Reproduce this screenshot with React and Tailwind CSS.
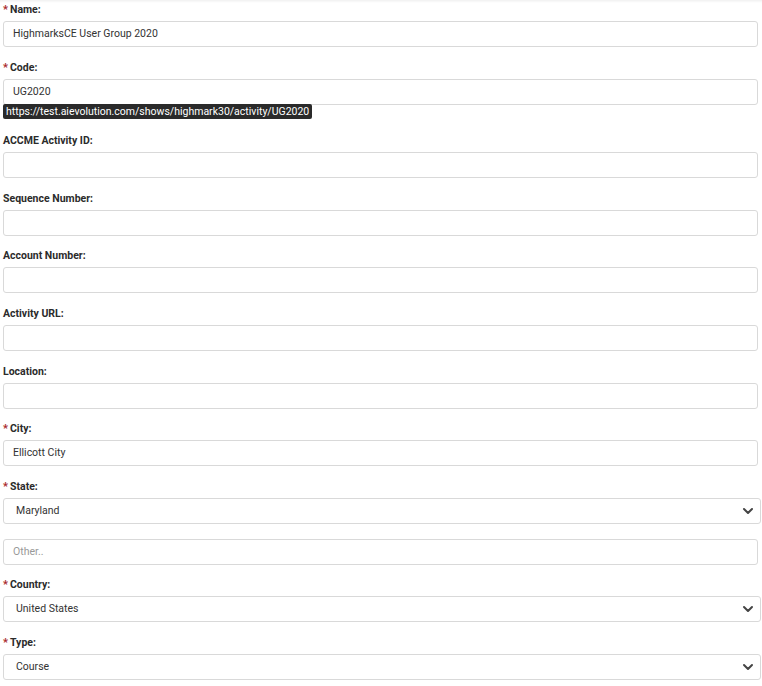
const font = { fontFamily: "Roboto, 'Liberation Sans', sans-serif" };

function Label({ text, required }) {
  return (
    <div className="h-[14px] mb-[4px] flex items-center text-[10.5px] font-bold text-[#2b2b2b] leading-[14px]">
      {required && <span className="text-[#a8252b] mr-[2px] text-[11px]">*</span>}
      {text}
    </div>
  );
}

function TextInput({ value, placeholder }) {
  return (
    <div className="h-[26px] w-[755px] border border-[#d9d9d9] rounded-[3px] bg-white flex items-center pl-[9px] text-[10.5px] text-[#333]">
      {value ? value : <span className="text-[#999]">{placeholder}</span>}
    </div>
  );
}

function Select({ value }) {
  return (
    <div className="h-[26px] w-[758px] border border-[#d9d9d9] rounded-[3px] bg-white flex items-center justify-between pl-[12px] pr-[6px] text-[10.5px] text-[#333]">
      <span>{value}</span>
      <svg width="12" height="12" viewBox="0 0 12 12" className="text-[#444]">
        <path d="M2 4 L6 8 L10 4" fill="none" stroke="currentColor" strokeWidth="2" strokeLinecap="round" strokeLinejoin="round" />
      </svg>
    </div>
  );
}

function Field({ label, required, children }) {
  return (
    <div className="mb-[13.6px]">
      <Label text={label} required={required} />
      {children}
    </div>
  );
}

export default function App() {
  return (
    <div
      className="w-[762px] h-[686px] bg-white pl-[3px] pt-[3px] overflow-hidden shadow-[inset_0_3px_3px_-2px_rgba(0,0,0,0.08)]"
      style={font}
    >
      <Field label="Name:" required>
        <TextInput value="HighmarksCE User Group 2020" />
      </Field>
      <div className="mb-[13.6px]">
        <Label text="Code:" required />
        <TextInput value="UG2020" />
        <div className="mt-[-1px] h-[17px] flex items-start">
          <span className="bg-[#2a2a2a] text-white text-[10.5px] leading-[15px] px-[3px] rounded-[2px]">
            https://test.aievolution.com/shows/highmark30/activity/UG2020
          </span>
        </div>
      </div>
      <Field label="ACCME Activity ID:">
        <TextInput />
      </Field>
      <Field label="Sequence Number:">
        <TextInput />
      </Field>
      <Field label="Account Number:">
        <TextInput />
      </Field>
      <Field label="Activity URL:">
        <TextInput />
      </Field>
      <Field label="Location:">
        <TextInput />
      </Field>
      <Field label="City:" required>
        <TextInput value="Ellicott City" />
      </Field>
      <Field label="State:" required>
        <Select value="Maryland" />
        <div className="mt-[15px]">
          <TextInput placeholder="Other.." />
        </div>
      </Field>
      <Field label="Country:" required>
        <Select value="United States" />
      </Field>
      <Field label="Type:" required>
        <Select value="Course" />
      </Field>
    </div>
  );
}
